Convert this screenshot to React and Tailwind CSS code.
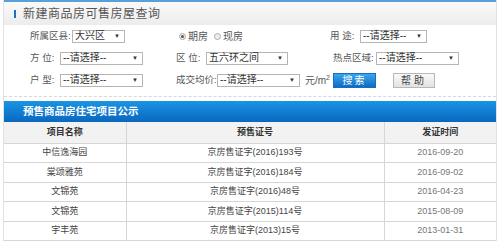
import React from "react";

const font = { fontFamily: '"Liberation Sans", "Noto Sans CJK SC", sans-serif' };

function Select({ value, w }) {
  return (
    <div className={`shrink-0 flex items-center justify-between h-[13px] border border-[#b5b5b5] bg-white pl-[2px] pr-[4px] text-[10px] leading-none text-[#333] whitespace-nowrap ${w}`}>
      <span>{value}</span>
      <span className="text-[6px] text-[#333]">▼</span>
    </div>
  );
}

function Label({ children, w }) {
  return <span className={`shrink-0 whitespace-nowrap text-[9.5px] text-[#555] leading-none ${w || ""}`}>{children}</span>;
}

const rows = [
  ["中信逸海园", "京房售证字(2016)193号", "2016-09-20"],
  ["棠颂雅苑", "京房售证字(2016)184号", "2016-09-02"],
  ["文锦苑", "京房售证字(2016)48号", "2016-04-23"],
  ["文锦苑", "京房售证字(2015)114号", "2015-08-09"],
  ["宇丰苑", "京房售证字(2013)15号", "2013-01-31"],
];

export default function App() {
  return (
    <div className="w-[500px] h-[245px] bg-white overflow-hidden" style={font}>
      <div className="mx-[3px] border-l border-r border-[#e2e2e2]">
        {/* query panel */}
        <div className="border-t-2 border-[#5a9fd8]">
          <div className="h-[23px] flex items-center pl-[10px] bg-gradient-to-b from-[#fafafa] to-[#ececec]">
            <span className="w-[2px] h-[8px] bg-[#1f6fc5] mr-[7px]" />
            <span className="text-[12px] tracking-[0.5px] text-[#555]">新建商品房可售房屋查询</span>
          </div>
          <div className="border-b border-dashed border-[#d8d8d8] h-[72px] pl-[26px]">
            <div className="flex items-center h-[22px]">
              <div className="flex items-center w-[144px]">
                <Label w="w-[42px]">所属区县:</Label>
                <Select value="大兴区" w="w-[53px]" />
              </div>
              <div className="flex items-center w-[156px] pl-[5px] text-[10px] text-[#555] whitespace-nowrap">
                <span className="w-[7px] h-[7px] rounded-full border border-[#aaa] bg-[#eee] flex items-center justify-center mr-[2px]">
                  <span className="w-[3px] h-[3px] rounded-full bg-[#555]" />
                </span>
                <span className="mr-[6px]">期房</span>
                <span className="w-[7px] h-[7px] rounded-full border border-[#aaa] bg-[#eee] mr-[2px]" />
                <span>现房</span>
              </div>
              <div className="flex items-center">
                <Label w="w-[30px]">用 途:</Label>
                <Select value="--请选择--" w="w-[67px]" />
              </div>
            </div>
            <div className="flex items-center h-[22px]">
              <div className="flex items-center w-[146px]">
                <Label w="w-[30px]">方 位:</Label>
                <Select value="--请选择--" w="w-[83px]" />
              </div>
              <div className="flex items-center w-[157px]">
                <Label w="w-[30px]">区 位:</Label>
                <Select value="五六环之间" w="w-[82px]" />
              </div>
              <div className="flex items-center">
                <Label w="w-[43px]">热点区域:</Label>
                <Select value="--请选择--" w="w-[83px]" />
              </div>
            </div>
            <div className="flex items-center h-[22px]">
              <div className="flex items-center w-[146px]">
                <Label w="w-[30px]">户 型:</Label>
                <Select value="--请选择--" w="w-[83px]" />
              </div>
              <div className="flex items-center w-[157px]">
                <Label w="w-[41px]">成交均价:</Label>
                <Select value="--请选择--" w="w-[83px]" />
                <span className="ml-[5px] text-[10px] text-[#555] whitespace-nowrap">
                  元/m<sup className="text-[7px]">2</sup>
                </span>
              </div>
              <div className="flex items-center">
                <div className="w-[43px] h-[15px] flex items-center justify-center bg-gradient-to-b from-[#3aa7ec] to-[#0f6bc4] border border-[#1b6bbf] text-white text-[10px] tracking-[2px]">
                  搜索
                </div>
                <div className="ml-[17px] w-[42px] h-[15px] flex items-center justify-center bg-gradient-to-b from-[#fafafa] to-[#e2e2e2] border border-[#b8b8b8] text-[#444] text-[10px] tracking-[3px]">
                  帮助
                </div>
              </div>
            </div>
          </div>
        </div>

        {/* list panel */}
        <div className="mt-[4px]">
          <div className="h-[21px] flex items-center pl-[19px] bg-gradient-to-b from-[#1a95e4] to-[#0a67c0]">
            <span className="text-white text-[10.5px] font-bold">预售商品房住宅项目公示</span>
          </div>
          <table className="w-full border-collapse text-[9px] text-[#444]">
            <thead>
              <tr className="h-[21px] bg-[#f2f2f2]">
                <th className="w-[122px] border-r border-b border-[#d6d6d6] font-bold text-[#333]">项目名称</th>
                <th className="w-[258px] border-r border-b border-[#d6d6d6] font-bold text-[#333]">预售证号</th>
                <th className="border-b border-[#d6d6d6] font-bold text-[#333]">发证时间</th>
              </tr>
            </thead>
            <tbody>
              {rows.map((r, i) => (
                <tr key={i} className="h-[19.5px]">
                  <td className="border-r border-b border-[#d6d6d6] text-center leading-none">{r[0]}</td>
                  <td className="border-r border-b border-[#d6d6d6] text-center leading-none">{r[1]}</td>
                  <td className="border-b border-[#d6d6d6] text-center leading-none text-[#777]">{r[2]}</td>
                </tr>
              ))}
            </tbody>
          </table>
        </div>
      </div>
    </div>
  );
}
